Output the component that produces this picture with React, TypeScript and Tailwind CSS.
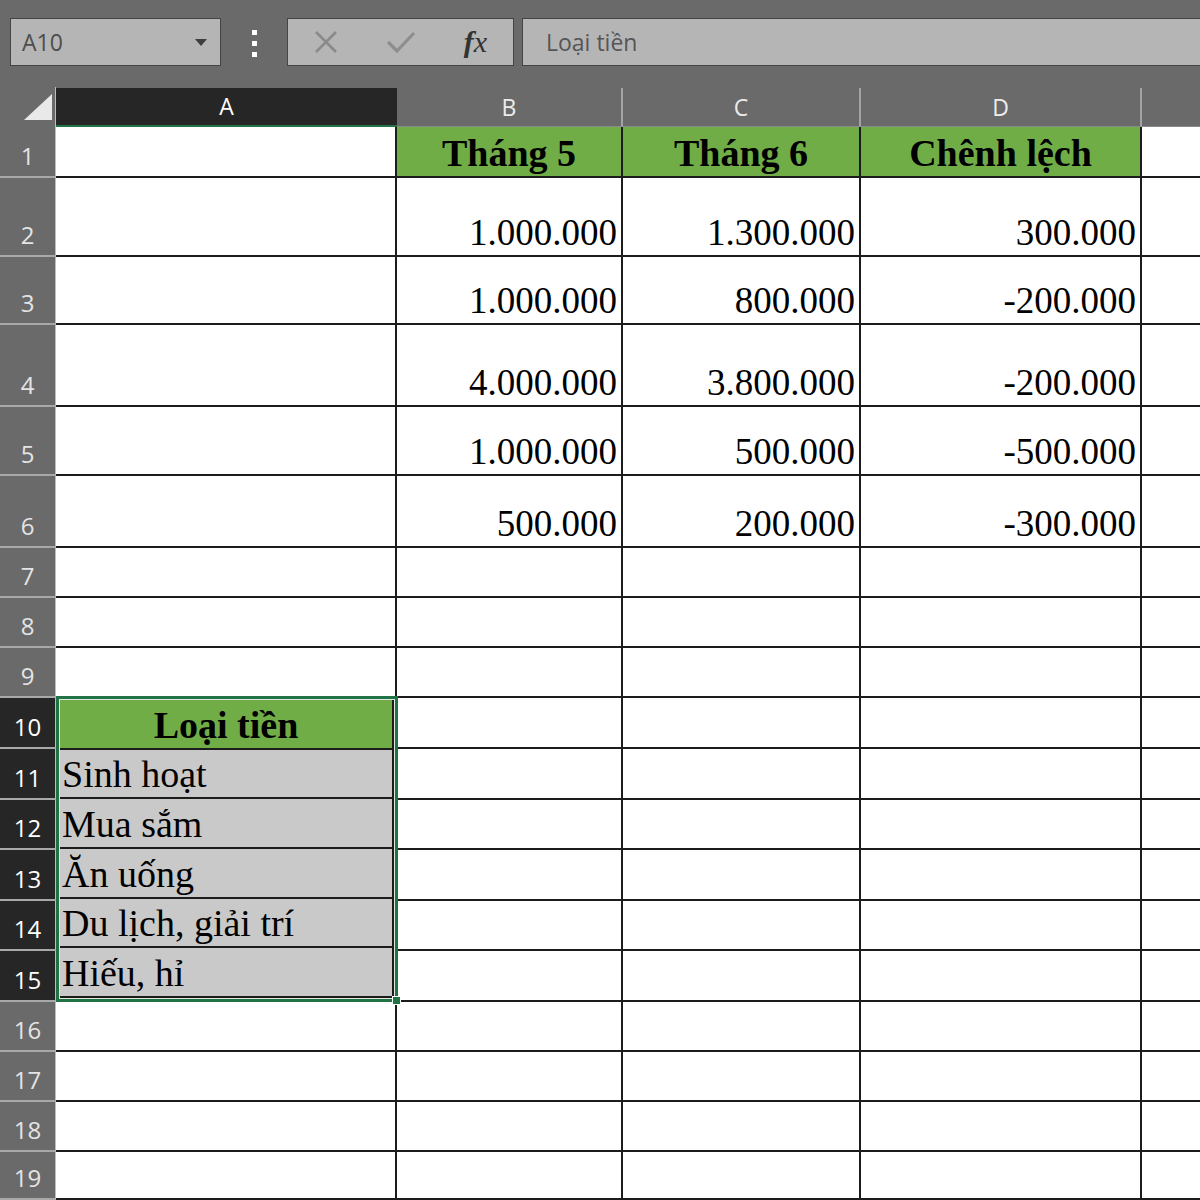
const uiFont = { fontFamily: '"Open Sans", "Noto Sans", sans-serif' }

type Cell = { text?: string; head?: boolean }

const dataRows: Cell[][] = [
  [{ text: 'Tháng 5', head: true }, { text: 'Tháng 6', head: true }, { text: 'Chênh lệch', head: true }],
  [{ text: '1.000.000' }, { text: '1.300.000' }, { text: '300.000' }],
  [{ text: '1.000.000' }, { text: '800.000' }, { text: '-200.000' }],
  [{ text: '4.000.000' }, { text: '3.800.000' }, { text: '-200.000' }],
  [{ text: '1.000.000' }, { text: '500.000' }, { text: '-500.000' }],
  [{ text: '500.000' }, { text: '200.000' }, { text: '-300.000' }],
]

const categories = ['Sinh hoạt', 'Mua sắm', 'Ăn uống', 'Du lịch, giải trí', 'Hiếu, hỉ']

// no background here, each cell picks its own fill
const cellClass = 'flex items-end border-b-2 border-r-2 border-[#1c1c1c] pb-[4px] font-["Liberation_Serif","Times_New_Roman",serif] text-[37px] leading-none text-black'

function RowHeader({ n, active }: { n: number; active?: boolean }) {
  return (
    <div
      className={`flex items-end justify-center border-b-2 border-r border-b-[#a9a9a9] border-r-[#bdbdbd] pb-[8px] text-[24px] leading-none ${active ? 'bg-[#262626] text-white' : 'bg-[#6a6a6a] text-[#e4e4e4]'}`}
      style={uiFont}
    >
      {n}
    </div>
  )
}

function ColHeader({ label, active }: { label: string; active?: boolean }) {
  return (
    <div
      className={`mt-[1px] flex items-center justify-center text-[23px] leading-none ${active ? 'border-b-2 border-[#217346] bg-[#262626] text-white' : 'border-r-2 border-b border-r-[#a4a4a4] border-b-[#8a8a8a] bg-[#6a6a6a] text-[#ececec]'}`}
      style={uiFont}
    >
      {label}
    </div>
  )
}

export default function App() {
  return (
    <div className="h-[1200px] w-[1200px] overflow-hidden bg-[#6a6a6a]">
      {/* formula bar */}
      <div className="flex h-[87px] items-start pl-[10px] pt-[18px]" style={uiFont}>
        <div className="flex h-[48px] w-[211px] items-center justify-between border border-[#454545] bg-[#b5b5b5] pl-[11px] pr-[13px]">
          <span className="text-[23px] text-[#4d4d4d]">A10</span>
          <svg width="12" height="7" viewBox="0 0 12 7">
            <path d="M0 0 H12 L6 7 Z" fill="#3e3e3e" />
          </svg>
        </div>
        <div className="ml-[31px] mt-[12px] flex w-[5px] flex-col gap-[6px]">
          <div className="h-[5px] w-[5px] bg-white" />
          <div className="h-[5px] w-[5px] bg-white" />
          <div className="h-[5px] w-[5px] bg-white" />
        </div>
        <div className="ml-[30px] grid h-[48px] w-[227px] grid-cols-3 items-center border border-[#454545] bg-[#b5b5b5]">
          <div className="flex justify-center">
            <svg width="26" height="26" viewBox="0 0 26 26">
              <path d="M3 3 L23 23 M23 3 L3 23" stroke="#8a8a8a" strokeWidth="2.6" />
            </svg>
          </div>
          <div className="flex justify-center">
            <svg width="30" height="24" viewBox="0 0 30 24">
              <path d="M2 12 L11 21 L28 3" stroke="#8e8e8e" strokeWidth="3.2" fill="none" />
            </svg>
          </div>
          <div className="flex justify-center">
            <span className="font-['Liberation_Serif',serif] text-[30px] italic leading-none text-[#333]">
              <span className="font-bold">f</span>x
            </span>
          </div>
        </div>
        <div className="ml-[8px] flex h-[48px] flex-1 items-center border border-r-0 border-[#454545] bg-[#b5b5b5] pl-[23px]">
          <span className="text-[23px] text-[#555]">Loại tiền</span>
        </div>
      </div>

      {/* sheet */}
      <div className="grid grid-cols-[56px_341px_226px_238px_281px_1fr] grid-rows-[40px_51px_79px_68px_82px_69px_72px_50px_50px_50px_51px_51px_50px_51px_50px_51px_50px_50px_50px_48px]">
        <div className="relative border-r border-[#bdbdbd] bg-[#6a6a6a]">
          <svg className="absolute left-[22px] top-[6px]" width="32" height="28" viewBox="0 0 32 28">
            <path d="M30 1 V27 H2 Z" fill="#e9e9e9" />
          </svg>
        </div>
        <ColHeader label="A" active />
        <ColHeader label="B" />
        <ColHeader label="C" />
        <ColHeader label="D" />
        <div className="mt-[1px] border-b border-[#8a8a8a] bg-[#6a6a6a]" />

        {Array.from({ length: 19 }, (_, i) => {
          const n = i + 1
          const row = dataRows[i]
          const inSelection = n >= 10 && n <= 15
          return [
            <RowHeader key={`h${n}`} n={n} active={inSelection} />,
            inSelection ? null : <div key={`a${n}`} className={`${cellClass} bg-white`} />,
            ...[0, 1, 2].map((c) => {
              const cell = row?.[c]
              if (cell?.head) {
                return (
                  <div key={`c${n}-${c}`} className={`${cellClass} justify-center bg-[#70ad47] text-[38px] font-bold`}>
                    {cell.text}
                  </div>
                )
              }
              return (
                <div key={`c${n}-${c}`} className={`${cellClass} justify-end bg-white pr-[4px]`}>
                  {cell?.text}
                </div>
              )
            }),
            <div key={`e${n}`} className="border-b-2 border-[#1c1c1c] bg-white" />,
          ]
        })}

        {/* selected range A10:A15 */}
        <div className="relative z-10 col-start-2 row-start-11 row-end-17 -mr-[1px] -mt-[2px] border-[3px] border-[#217346]">
          <div className="flex h-full flex-col border border-[#dfe9df]">
            <div className={`${cellClass} flex-1 justify-center border-r-0 bg-[#70ad47] text-[38px] font-bold`}>Loại tiền</div>
            {categories.map((label, i) => (
              <div
                key={label}
                className={`${cellClass} flex-1 border-r-0 bg-[#c9c9c9] pl-[2px] text-[38px] ${i === categories.length - 1 ? 'border-b-0' : ''}`}
              >
                {label}
              </div>
            ))}
          </div>
          <div className="absolute -bottom-[6px] -right-[6px] h-[9px] w-[9px] border border-white bg-[#217346]" />
        </div>
      </div>
    </div>
  )
}
